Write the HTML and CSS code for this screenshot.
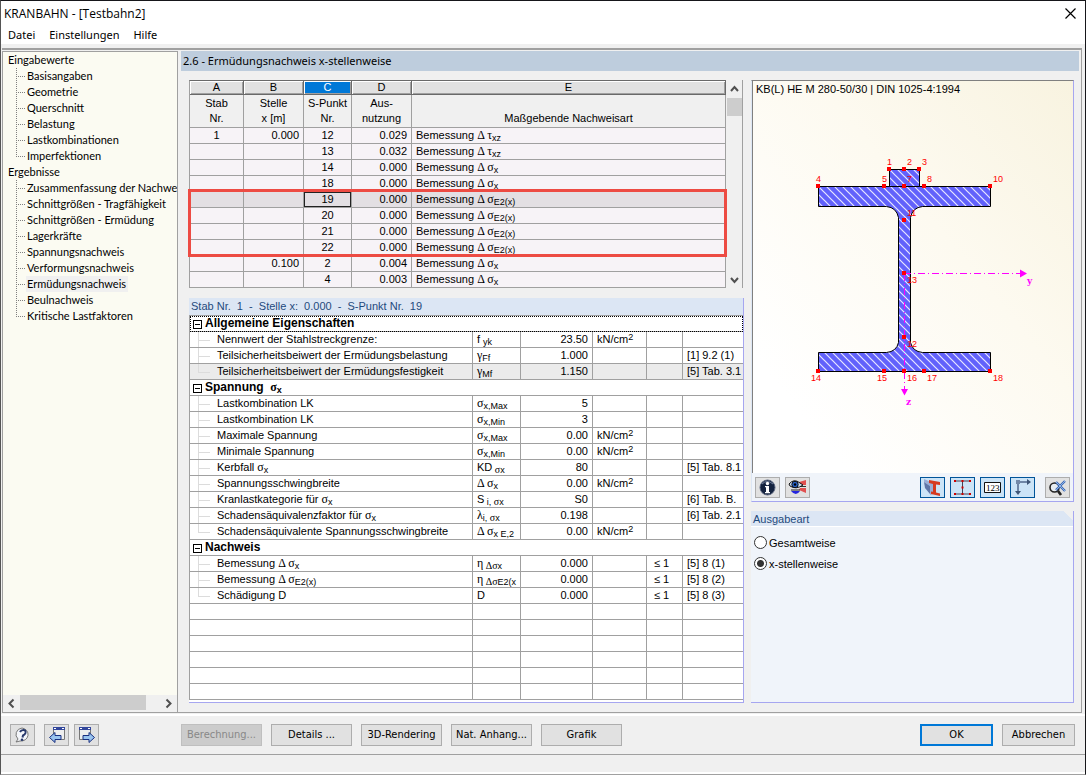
FILE: index.html
```html
<!DOCTYPE html>
<html lang="de">
<head>
    <meta charset="UTF-8">
    <meta name="viewport" content="width=device-width, initial-scale=1.0">
    <title>KRANBAHN - [Testbahn2]</title>
    <link rel="stylesheet" href="styles.css">
</head>
<body>
<div class="window">
    <header class="titlebar">
        <h1>KRANBAHN - [Testbahn2]</h1>
        <button class="close" aria-label="Schließen">
            <svg width="11" height="11" viewBox="0 0 11 11"><path d="M.5 .5l10 10M10.500 .5l-10 10" stroke="#000" stroke-width="1.2"/></svg>
        </button>
    </header>
    <nav class="menu">
        <button>Datei</button>
        <button>Einstellungen</button>
        <button>Hilfe</button>
    </nav>

    <div class="main">
        <aside class="sidebar">
            <div class="tree">
                <p>Eingabewerte</p>
                <ul>
                    <li><a href="#">Basisangaben</a></li>
                    <li><a href="#">Geometrie</a></li>
                    <li><a href="#">Querschnitt</a></li>
                    <li><a href="#">Belastung</a></li>
                    <li><a href="#">Lastkombinationen</a></li>
                    <li><a href="#">Imperfektionen</a></li>
                </ul>
                <p>Ergebnisse</p>
                <ul>
                    <li><a href="#">Zusammenfassung der Nachwe</a></li>
                    <li><a href="#">Schnittgrößen - Tragfähigkeit</a></li>
                    <li><a href="#">Schnittgrößen - Ermüdung</a></li>
                    <li><a href="#">Lagerkräfte</a></li>
                    <li><a href="#">Spannungsnachweis</a></li>
                    <li><a href="#">Verformungsnachweis</a></li>
                    <li><a href="#" class="current">Ermüdungsnachweis</a></li>
                    <li><a href="#">Beulnachweis</a></li>
                    <li><a href="#">Kritische Lastfaktoren</a></li>
                </ul>
            </div>
            <div class="hscroll">
                <svg width="17" height="17" viewBox="0 0 17 17"><path d="M10.500 4.500l-4 4 4 4" class="chevron"/></svg>
                <div class="track"><div class="thumb"></div></div>
                <svg width="17" height="17" viewBox="0 0 17 17"><path d="M6.500 4.500l4 4-4 4" class="chevron"/></svg>
            </div>
        </aside>

        <section class="content">
            <h2>2.6 - Ermüdungsnachweis x-stellenweise</h2>
            <div class="panels">
                <div class="left">
                    <div class="results">
                        <div class="grid-wrap">
                            <table class="grid">
                                <colgroup><col class="c-a"><col class="c-b"><col class="c-c"><col class="c-d"><col></colgroup>
                                <thead>
                                    <tr class="letters"><th>A</th><th>B</th><th class="sel">C</th><th>D</th><th>E</th></tr>
                                    <tr class="names"><th>Stab<br>Nr.</th><th>Stelle<br>x [m]</th><th>S-Punkt<br>Nr.</th><th>Aus-<br>nutzung</th><th>Maßgebende Nachweisart</th></tr>
                                </thead>
                                <tbody>
                                    <tr><td>1</td><td>0.000</td><td>12</td><td>0.029</td><td>Bemessung <i>Δ τ</i><sub>xz</sub></td></tr>
                                    <tr><td></td><td></td><td>13</td><td>0.032</td><td>Bemessung <i>Δ τ</i><sub>xz</sub></td></tr>
                                    <tr><td></td><td></td><td>14</td><td>0.000</td><td>Bemessung <i>Δ σ</i><sub>x</sub></td></tr>
                                    <tr><td></td><td></td><td>18</td><td>0.000</td><td>Bemessung <i>Δ σ</i><sub>x</sub></td></tr>
                                    <tr class="active"><td></td><td></td><td class="cell">19</td><td>0.000</td><td>Bemessung <i>Δ σ</i><sub>E2(x)</sub></td></tr>
                                    <tr><td></td><td></td><td>20</td><td>0.000</td><td>Bemessung <i>Δ σ</i><sub>E2(x)</sub></td></tr>
                                    <tr><td></td><td></td><td>21</td><td>0.000</td><td>Bemessung <i>Δ σ</i><sub>E2(x)</sub></td></tr>
                                    <tr><td></td><td></td><td>22</td><td>0.000</td><td>Bemessung <i>Δ σ</i><sub>E2(x)</sub></td></tr>
                                    <tr><td></td><td>0.100</td><td>2</td><td>0.004</td><td>Bemessung <i>Δ σ</i><sub>x</sub></td></tr>
                                    <tr><td></td><td></td><td>4</td><td>0.003</td><td>Bemessung <i>Δ σ</i><sub>x</sub></td></tr>
                                </tbody>
                            </table>
                            <div class="marker"></div>
                        </div>
                        <div class="vscroll">
                            <svg width="15" height="18" viewBox="0 0 15 18"><path d="M4 11l3.500-4 3.500 4" class="chevron"/></svg>
                            <div class="track"><div class="thumb"></div></div>
                            <svg width="15" height="18" viewBox="0 0 15 18"><path d="M4 8l3.500 4 3.500-4" class="chevron"/></svg>
                        </div>
                    </div>

                    <div class="details">
                        <h3>Stab Nr.&nbsp; 1&nbsp; -&nbsp; Stelle x:&nbsp; 0.000&nbsp; -&nbsp; S-Punkt Nr.&nbsp; 19</h3>
                        <table class="props">
                            <colgroup><col><col class="p-sym"><col class="p-val"><col class="p-unit"><col class="p-lim"><col class="p-ref"></colgroup>
                            <tbody>
                                <tr class="group focus"><th colspan="6"><button class="toggle" aria-label="Zuklappen"></button>Allgemeine Eigenschaften</th></tr>
                                <tr><td>Nennwert der Stahlstreckgrenze:</td><td>f <sub>yk</sub></td><td>23.50</td><td>kN/cm<sup>2</sup></td><td></td><td></td></tr>
                                <tr><td>Teilsicherheitsbeiwert der Ermüdungsbelastung</td><td><i>γ</i><sub>Ff</sub></td><td>1.000</td><td></td><td></td><td>[1] 9.2 (1)</td></tr>
                                <tr class="last shaded"><td>Teilsicherheitsbeiwert der Ermüdungsfestigkeit</td><td><i>γ</i><sub>Mf</sub></td><td>1.150</td><td></td><td></td><td>[5] Tab. 3.1</td></tr>
                                <tr class="group"><th colspan="6"><button class="toggle" aria-label="Zuklappen"></button>Spannung &nbsp;<i>σ</i><sub>x</sub></th></tr>
                                <tr><td>Lastkombination LK</td><td><i>σ</i><sub>x,Max</sub></td><td>5</td><td></td><td></td><td></td></tr>
                                <tr><td>Lastkombination LK</td><td><i>σ</i><sub>x,Min</sub></td><td>3</td><td></td><td></td><td></td></tr>
                                <tr><td>Maximale Spannung</td><td><i>σ</i><sub>x,Max</sub></td><td>0.00</td><td>kN/cm<sup>2</sup></td><td></td><td></td></tr>
                                <tr><td>Minimale Spannung</td><td><i>σ</i><sub>x,Min</sub></td><td>0.00</td><td>kN/cm<sup>2</sup></td><td></td><td></td></tr>
                                <tr><td>Kerbfall <i>σ</i><sub>x</sub></td><td>KD<sub> <i>σ</i>x</sub></td><td>80</td><td></td><td></td><td>[5] Tab. 8.1</td></tr>
                                <tr><td>Spannungsschwingbreite</td><td><i>Δ σ</i><sub>x</sub></td><td>0.00</td><td>kN/cm<sup>2</sup></td><td></td><td></td></tr>
                                <tr><td>Kranlastkategorie für <i>σ</i><sub>x</sub></td><td>S<sub> i, <i>σ</i>x</sub></td><td>S0</td><td></td><td></td><td>[6] Tab. B.</td></tr>
                                <tr><td>Schadensäquivalenzfaktor für <i>σ</i><sub>x</sub></td><td><i>λ</i><sub>i, <i>σ</i>x</sub></td><td>0.198</td><td></td><td></td><td>[6] Tab. 2.1</td></tr>
                                <tr class="last"><td>Schadensäquivalente Spannungsschwingbreite</td><td><i>Δ σ</i><sub>x E,2</sub></td><td>0.00</td><td>kN/cm<sup>2</sup></td><td></td><td></td></tr>
                                <tr class="group"><th colspan="6"><button class="toggle" aria-label="Zuklappen"></button>Nachweis</th></tr>
                                <tr><td>Bemessung <i>Δ σ</i><sub>x</sub></td><td><i>η</i><sub> <i>Δσ</i>x</sub></td><td>0.000</td><td></td><td>≤ 1</td><td>[5] 8 (1)</td></tr>
                                <tr><td>Bemessung <i>Δ σ</i><sub>E2(x)</sub></td><td><i>η</i><sub> <i>Δσ</i>E2(x</sub></td><td>0.000</td><td></td><td>≤ 1</td><td>[5] 8 (2)</td></tr>
                                <tr class="last"><td>Schädigung D</td><td>D</td><td>0.000</td><td></td><td>≤ 1</td><td>[5] 8 (3)</td></tr>
                                <tr class="empty"><td></td><td></td><td></td><td></td><td></td><td></td></tr>
                                <tr class="empty"><td></td><td></td><td></td><td></td><td></td><td></td></tr>
                                <tr class="empty"><td></td><td></td><td></td><td></td><td></td><td></td></tr>
                                <tr class="empty"><td></td><td></td><td></td><td></td><td></td><td></td></tr>
                                <tr class="empty"><td></td><td></td><td></td><td></td><td></td><td></td></tr>
                                <tr class="empty"><td></td><td></td><td></td><td></td><td></td><td></td></tr>
                            </tbody>
                        </table>
                    </div>
                </div>

                <div class="right">
                    <div class="graphic">
                        <div class="canvas">
                            <p>KB(L) HE M 280-50/30 | DIN 1025-4:1994</p>
                            <svg viewBox="753 98 320 375" role="img" aria-label="Querschnitt">
                                <defs>
                                    <pattern id="hatch" width="8" height="8" patternUnits="userSpaceOnUse">
                                        <rect width="8" height="8" fill="#6262fb"/>
                                        <path d="M-1 -1l10 10M-1 7l2 2M7 -1l2 2" stroke="#e8e8ff" stroke-width="1.2"/>
                                    </pattern>
                                </defs>
                                <g fill="url(#hatch)" stroke="#000">
                                    <path d="M818.500 186.500h172v20h-68q-10 1-12 11v125q2 9 12 10h68v19h-172v-19h68q10-1 12-10v-125q-2-10-12-11h-68z"/>
                                    <path d="M889.500 169.500h30v17h-30z"/>
                                </g>
                                <g stroke="#f0f" fill="none">
                                    <path d="M904 273.500h117" stroke-dasharray="7 3 1 3"/>
                                    <path d="M904.500 274v115" stroke-dasharray="7 3 1 3"/>
                                </g>
                                <path d="M1020 269.500l7 4-7 4zM901 389h7l-3.500 6.500z" fill="#f0f"/>
                                <g class="axis"><text x="1027" y="284">y</text><text x="906" y="405">z</text></g>
                                <path fill="#f00" d="M887 167h4v4h-4zM902 167h4v4h-4zM917 167h4v4h-4zM816 184h4v4h-4zM882 184h4v4h-4zM902 184h4v4h-4zM922 184h4v4h-4zM988 184h4v4h-4zM902 218h4v4h-4zM902 271h4v4h-4zM902 335h4v4h-4zM816 369h4v4h-4zM882 369h4v4h-4zM902 369h4v4h-4zM922 369h4v4h-4zM988 369h4v4h-4z"/>
                                <g class="points">
                                    <text x="887" y="165">1</text><text x="907" y="165">2</text><text x="922" y="165">3</text>
                                    <text x="816" y="182">4</text><text x="882" y="182">5</text><text x="907" y="182">7</text><text x="927" y="182">8</text><text x="993" y="182">10</text>
                                    <text x="907" y="216">11</text><text x="907" y="283">13</text><text x="907" y="347">12</text>
                                    <text x="811" y="381">14</text><text x="877" y="381">15</text><text x="907" y="381">16</text><text x="927" y="381">17</text><text x="993" y="381">18</text>
                                </g>
                            </svg>
                        </div>
                        <div class="tools">
                            <button aria-label="Info"><svg width="19" height="19" viewBox="0 0 19 19"><circle cx="9.500" cy="9.500" r="7.500" fill="#15233f" stroke="#59647d"/><path d="M4 6q5-5 11 0" stroke="#74839f" fill="none"/><circle cx="9.500" cy="5.500" r="1.700" fill="#fff"/><path d="M7 8h4v6h1v1.300H7V14h1V9.300H7z" fill="#fff"/></svg></button>
                            <button aria-label="Ansicht"><svg width="19" height="19" viewBox="0 0 19 19"><path d="M11 4l7-2v5h-7zM12 10h6v5l-7-3z" fill="#e05050"/><path d="M12 8.500h6" stroke="#333"/><path d="M3 13h9q-4 6-9 0z" fill="#2525e0"/><path d="M3 12h9" stroke="#222"/><path d="M1 6q5-6 11-1l3 2q-7 5-13 1z" fill="#cfe0f5" stroke="#111"/><circle cx="7" cy="6.500" r="3.200" fill="#245fc4" stroke="#111"/><circle cx="7" cy="6.500" r="1.200" fill="#000"/></svg></button>
                            <span class="spacer"></span>
                            <button class="on" aria-label="Profil"><svg width="19" height="19" viewBox="0 0 19 19"><path d="M1 1l9 4v11l-3 1V8L1 4z" fill="#9aaed6"/><path d="M1 4l6 4v8l-5-6z" fill="#5f76a8"/><path d="M6 2l11 2v3l-4-.5v8l4 1v2.500L8 16v-2.500l2 .3V6L6 5z" fill="#d63a20"/></svg></button>
                            <button class="on" aria-label="Spannungspunkte"><svg width="19" height="19" viewBox="0 0 19 19"><path d="M2 3h15M2 16h15M9.500 3v13" stroke="#445"/><path d="M1 2h2v2H1zM8.500 2h2v2h-2zM16 2h2v2h-2zM8.500 8.500h2v2h-2zM1 15h2v2H1zM8.500 15h2v2h-2zM16 15h2v2h-2z" fill="#d00000"/></svg></button>
                            <button class="on" aria-label="Nummern"><svg width="19" height="19" viewBox="0 0 19 19"><path d="M1.500 4.500h16v10h-16z" fill="#fff" stroke="#111"/><text x="3" y="13" class="num">123</text></svg></button>
                            <button class="on" aria-label="Achsen"><svg width="19" height="19" viewBox="0 0 19 19"><path d="M5 14V4h10" stroke="#6f86a6" stroke-width="2" fill="none"/><path d="M14 1l4 3-4 3zM2 13h6l-3 4z" fill="#3f5677"/><path d="M3 2h4v4H3z" fill="#7389a8"/></svg></button>
                            <button class="apart" aria-label="Zoom zurücksetzen"><svg width="19" height="19" viewBox="0 0 19 19"><circle cx="6.500" cy="9.500" r="4.500" fill="#e7edf2" stroke="#222" stroke-width="1.600"/><path d="M10 13l3 4" stroke="#222" stroke-width="2.600"/><path d="M8 4l9 9M17 3l-9 9" stroke="#3a67b4" stroke-width="2.400"/><path d="M8 4l9 9M17 3l-9 9" stroke="#8cb3e7"/></svg></button>
                        </div>
                    </div>

                    <fieldset class="output">
                        <legend>Ausgabeart</legend>
                        <label><input type="radio" name="art"> Gesamtweise</label>
                        <label><input type="radio" name="art" checked> x-stellenweise</label>
                    </fieldset>
                </div>
            </div>
        </section>
    </div>

    <footer class="buttons">
        <button class="icon" aria-label="Hilfe"><svg width="19" height="19" viewBox="0 0 19 19"><path d="M9 2a7 6.500 0 1 1-2 13l-4 1 2-3A7 6.500 0 0 1 9 2z" fill="#f4f6fa" stroke="#777"/><path d="M7 6q1-2 3.500-2t2 3q-.5 1.500-2.500 2.500l-.5 2" stroke="#27386b" stroke-width="2" fill="none"/><circle cx="9" cy="13.800" r="1.300" fill="#27386b"/></svg></button>
        <button class="icon back" aria-label="Zurück"><svg width="19" height="19" viewBox="0 0 19 19"><path d="M6.500 2.500h11v11h-11z" fill="#eee" stroke="#777"/><path d="M6 1h12v3H6z" fill="#33479c"/><path d="M7 2.500h2M15 2.500h2" stroke="#fff"/><path d="M2.500 11.500l5.500-5v3h6v4H8v3z" fill="#9ac4ef" stroke="#182f80"/></svg></button>
        <button class="icon" aria-label="Weiter"><svg width="19" height="19" viewBox="0 0 19 19"><path d="M2.500 2.500h11v11h-11z" fill="#eee" stroke="#777"/><path d="M2 1h12v3H2z" fill="#33479c"/><path d="M3 2.500h2M11 2.500h2" stroke="#fff"/><path d="M17.500 11.500l-5.500-5v3H6v4h6v3z" fill="#9ac4ef" stroke="#182f80"/></svg></button>
        <div class="actions">
            <button disabled>Berechnung...</button>
            <button>Details ...</button>
            <button>3D-Rendering</button>
            <button>Nat. Anhang...</button>
            <button>Grafik</button>
        </div>
        <button class="confirm ok">OK</button>
        <button class="confirm">Abbrechen</button>
    </footer>
    <div class="status"></div>
</div>
</body>
</html>
```

FILE: styles.css
```css
* {
    box-sizing: border-box;
}
body {
    margin: 0;
    font-family: "Noto Sans", Tahoma, sans-serif;
    font-size: 11px;
    line-height: 16px;
    color: #000;
    background: #f0f0f0;
}
h1, h2, h3, p, ul {
    margin: 0;
    padding: 0;
    font-size: inherit;
    font-weight: normal;
}
button {
    font: inherit;
    color: inherit;
    padding: 0;
    border: 1px solid #adadad;
    background: #e1e1e1;
}
svg {
    display: block;
}
i {
    font-family: "Liberation Serif", serif;
    font-size: 12px;
    line-height: 0;
    font-style: normal;
}
.window {
    display: flex;
    flex-direction: column;
    min-height: 100vh;
    border: 1px solid #16161a;
    border-bottom-color: #a0a0a0;
    border-left-color: #555;
}
.titlebar, .menu {
    display: flex;
    background: #fff;
}
.titlebar {
    justify-content: space-between;
    align-items: center;
    height: 25px;
    padding: 0 9px 0 3px;
}
.titlebar h1 {
    font-family: "Open Sans", "Segoe UI", sans-serif;
    font-size: 12px;
}
.close {
    border: 0;
    background: none;
}
.menu {
    gap: 14px;
    height: 18px;
    padding-left: 7px;
}
.menu button {
    border: 0;
    background: none;
}

/* main area */
.main {
    display: flex;
    flex: 1;
    margin: 4px 3px 0 1px;
    border: 1px solid #a0a0a0;
    border-top-width: 2px;
    border-left: 0;
}
.sidebar {
    display: flex;
    flex-direction: column;
    flex: 0 0 176px;
    margin-top: 1px;
    border: 1px solid #a0a0a0;
    border-bottom: 0;
    background: #fbfbf2;
    overflow: hidden;
}
.tree {
    flex: 1;
    padding-left: 5px;
    font-family: Lato, Tahoma, sans-serif;
    white-space: nowrap;
}
.tree ul {
    list-style: none;
    padding-left: 8px;
}
.tree li {
    height: 16px;
    padding-left: 10px;
    background:
        repeating-linear-gradient(to right, #808080 0 1px, transparent 1px 2px) 0 8px / 9px 1px no-repeat,
        repeating-linear-gradient(#808080 0 1px, transparent 1px 2px) 0 0 / 1px 100% no-repeat;
}
.tree li:last-child {
    background-size: 9px 1px, 1px 9px;
}
.tree a {
    display: inline-block;
    padding: 0 2px 0 1px;
    color: #000;
    text-decoration: none;
}
.tree a.current {
    background: #f0f0f0;
}
.chevron {
    fill: none;
    stroke: #505050;
    stroke-width: 2;
}
.hscroll {
    display: flex;
    height: 17px;
    background: #f0f0f0;
}
.hscroll .track {
    flex: 1;
}
.hscroll .thumb {
    width: 90%;
    height: 15px;
    background: #cdcdcd;
}
.content {
    display: flex;
    flex-direction: column;
    flex: 1;
    min-width: 0;
    margin-left: 3px;
    padding-top: 1px;
}
.content h2 {
    height: 20px;
    margin-right: 2px;
    padding: 0 2px;
    line-height: 20px;
    background: #becddd;
}
.panels {
    display: flex;
    flex: 1;
    gap: 7px;
    padding: 9px 7px 9px 8px;
}
.left {
    flex: 555;
    min-width: 0;
    font-family: "Liberation Sans", Arial, sans-serif;
}
.right {
    display: flex;
    flex-direction: column;
    flex: 323;
    gap: 9px;
    min-width: 0;
}

/* result grid */
.results {
    display: flex;
    margin: 0 1px 10px 0;
    border-right: 1px solid #a0a0a0;
}
.grid-wrap {
    position: relative;
    flex: 1;
}
table {
    width: 100%;
    table-layout: fixed;
    border-collapse: separate;
    border-spacing: 0;
    border-left: 1px solid #a0a0a0;
}
th, td {
    height: 16px;
    padding: 0;
    line-height: 15px;
    border-right: 1px solid #a0a0a0;
    border-bottom: 1px solid #a0a0a0;
    white-space: nowrap;
    overflow: hidden;
    font-weight: normal;
}
sub, sup {
    font-size: 9px;
    line-height: 0;
}
sub {
    vertical-align: -2px;
}
sub i {
    font-size: 10px;
}
sup {
    vertical-align: 3px;
}
.c-a { width: 54px; }
.c-b { width: 60px; }
.c-c { width: 48px; }
.c-d { width: 60px; }
.grid {
    border-top: 1px solid #696969;
}
.grid .letters th {
    height: 14px;
    line-height: 13px;
    background: #e1e1e1;
    border-color: #696969;
    box-shadow: inset 1px 1px #fff, inset -1px -1px #a0a0a0;
}
.grid .letters .sel {
    color: #fff;
    background: #0078d7;
}
.grid .names th {
    height: 33px;
    padding-bottom: 1px;
    line-height: 15px;
    vertical-align: bottom;
}
.grid td {
    background: #f7f3f7;
    text-align: center;
}
.grid td:nth-child(2), .grid td:nth-child(4) {
    padding-right: 4px;
    text-align: right;
}
.grid td:nth-child(5) {
    padding-left: 4px;
    text-align: left;
}
.grid .active td {
    background: #e3dfe3;
}
.grid .active .cell {
    box-shadow: inset 0 0 0 1px #222;
}
/* frame over the four rows with E2(x) */
.marker {
    position: absolute;
    top: 109px;
    left: -1px;
    right: -1px;
    height: 68px;
    border: 3px solid #ed4b43;
}
.vscroll {
    display: flex;
    flex-direction: column;
    width: 16px;
    padding-left: 1px;
}
.vscroll .track {
    flex: 1;
}
.vscroll .thumb {
    height: 18px;
    background: #cdcdcd;
}

/* detail grid */
.details {
    padding-bottom: 2px;
    border-right: 1px solid #a6a6f0;
    border-bottom: 1px solid #a6a6f0;
    background: #fff;
}
.details h3 {
    height: 18px;
    padding-left: 2px;
    line-height: 17px;
    color: #1f4a7d;
    background: #dce6f4;
    border-bottom: 1px solid #a0a0a0;
}
.p-sym { width: 48px; }
.p-val { width: 72px; }
.p-unit { width: 54px; }
.p-lim { width: 36px; }
.p-ref { width: 60px; }
.props td {
    padding: 0 4px;
}
.props td:first-child {
    padding-left: 27px;
    background:
        linear-gradient(#dcdcdc, #dcdcdc) 8px 0 / 1px 100% no-repeat,
        linear-gradient(#dcdcdc, #dcdcdc) 8px 8px / 12px 1px no-repeat;
}
.props .last td:first-child {
    background-size: 1px 8px, 12px 1px;
}
.props .empty td:first-child {
    background: none;
}
.props td:nth-child(3) {
    text-align: right;
}
.props td:nth-child(5) {
    padding-left: 7px;
}
.props td:last-child, .props th {
    border-right: 0;
}
.props .shaded {
    background: #ebebeb;
}
.props .group th {
    text-align: left;
    font-size: 12px;
    font-weight: bold;
}
.props .focus th {
    outline: 1px dotted #000;
    outline-offset: -1px;
}
.toggle {
    width: 9px;
    height: 9px;
    margin: 0 3px;
    vertical-align: -1px;
    border: 1px solid #000;
    background: linear-gradient(#000, #000) center / 5px 1px no-repeat #fff;
}

/* cross-section view */
.graphic {
    border: 1px solid #a6a6f0;
    border-top-color: #808080;
    border-left-color: #dce6f4;
    background: #f0f4fa;
}
.canvas {
    border-left: 1px solid #808080;
    background: linear-gradient(to top right, #fff 15%, #fdfaf0 60%, #f8f3e0);
}
.canvas p {
    height: 17px;
    padding-left: 3px;
    white-space: nowrap;
    font-family: "Liberation Sans", Arial, sans-serif;
}
.canvas svg {
    width: 100%;
}
.points text {
    font: 9px "Liberation Sans", Arial, sans-serif;
    fill: #f00;
}
.axis text {
    font: bold 9px "DejaVu Serif", serif;
    fill: #f0f;
}
.num {
    font: 9px "Liberation Serif", serif;
}
.tools {
    display: flex;
    gap: 5px;
    height: 28px;
    padding: 4px 3px;
}
.tools button {
    display: grid;
    place-items: center;
    width: 25px;
    height: 21px;
}
.tools .on {
    background: #cce4f7;
    border-color: #005499;
}
.tools .apart {
    margin-left: 5px;
}
.spacer {
    flex: 1;
}
.output {
    flex: 1;
    min-width: 0;
    margin: 0;
    padding: 0 0 0 3px;
    border: 1px solid #a6a6f0;
    border-width: 0 1px 1px 0;
    font-family: "Liberation Sans", Arial, sans-serif;
    background: #f0f4fa;
}
.output legend {
    float: left;
    width: calc(100% + 3px);
    margin: 0 0 5px -3px;
    padding: 0 2px;
    height: 16px;
    color: #1f4a7d;
    background: linear-gradient(225deg, #f0f0f0 7px, #dce6f4 7px);
    border-bottom: 1px solid #fff;
}
.output label {
    display: flex;
    align-items: center;
    gap: 2px;
    clear: both;
    height: 21px;
}
.output input {
    appearance: none;
    width: 13px;
    height: 13px;
    margin: 0;
    border: 1px solid #333;
    border-radius: 50%;
    background: #fff;
}
.output input:checked {
    background: radial-gradient(#333 0 3px, #fff 4px);
}

/* bottom bar */
.buttons {
    display: flex;
    align-items: center;
    margin-top: 1px;
    padding: 8px 10px 8px 9px;
    border-top: 2px solid #fff;
}
.buttons button {
    width: 81px;
    height: 22px;
    font-family: "DejaVu Sans Condensed", Tahoma, sans-serif;
}
.buttons .icon {
    display: grid;
    place-items: center;
    width: 25px;
    margin-right: 5px;
}
.buttons .back {
    margin-left: 4px;
}
.actions {
    display: flex;
    flex: 1;
    gap: 9px;
    margin-left: 77px;
}
.buttons button:disabled {
    color: #888;
    background: #ccc;
    border-color: #bfbfbf;
}
.buttons .confirm {
    width: 73px;
    margin-left: 9px;
}
.buttons .ok {
    border: 2px solid #0078d7;
}
.status {
    height: 20px;
    border-top: 1px solid #a0a0a0;
    border-bottom: 2px solid #fff;
}
```
